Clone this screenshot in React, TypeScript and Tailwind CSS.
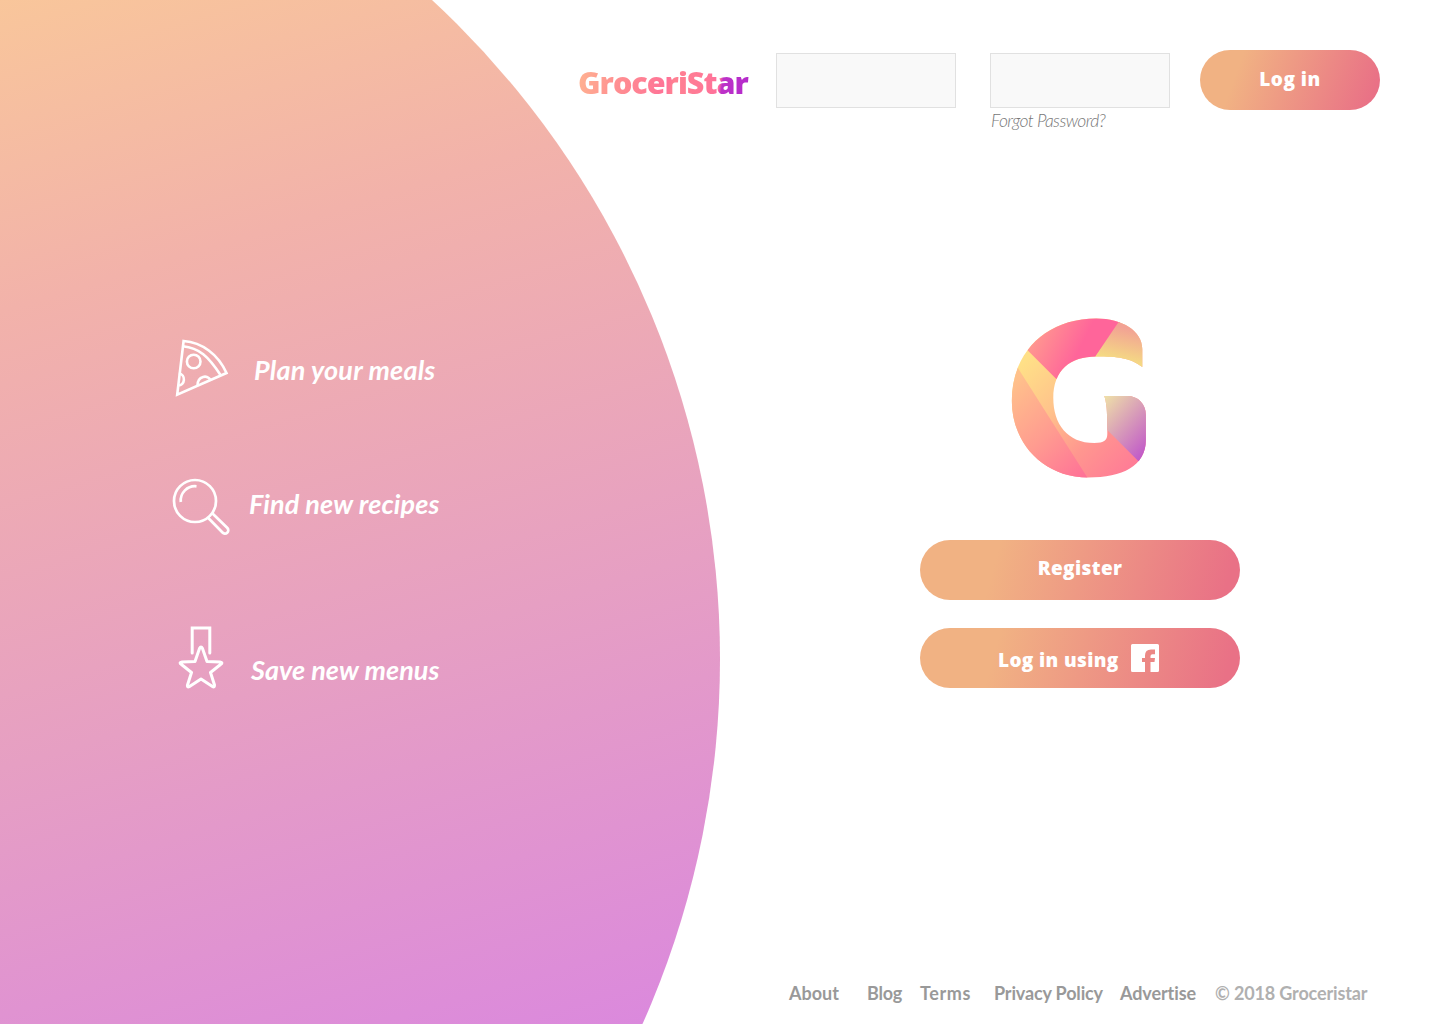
import React from "react";

const sans = "font-['Lato',sans-serif]";

function PizzaIcon() {
  return (
    <svg width="54" height="58" viewBox="0 0 54 58" fill="none" stroke="white" strokeWidth="2.6">
      <path d="M8.6 2C27 3.500 43 15 51.500 34L2.200 55.700Z" />
      <path d="M8 7.200C24 8.700 33.500 17.500 45.500 36" />
      <circle cx="18.700" cy="22.500" r="6.800" />
      <path d="M3.800 34.500C11 35 10.500 47 2.800 46.500M22.500 46.500C22.500 36.500 33 35.500 35.500 41" />
    </svg>
  );
}

function SearchIcon() {
  return (
    <svg width="58" height="58" viewBox="0 0 58 58" fill="none" stroke="white" strokeWidth="2.7">
      <circle cx="23" cy="23" r="21" />
      <path d="M8.800 24A14.300 14.300 0 0 1 24.500 8.300" />
      <path d="M35.800 39.500L50.500 54.500A2.800 2.800 0 0 0 55.400 50L40 35" />
    </svg>
  );
}

function MedalIcon() {
  return (
    <svg width="46" height="64" viewBox="0 0 46 64" fill="none" stroke="white" strokeWidth="3" strokeLinecap="round" strokeLinejoin="round">
      <path strokeLinejoin="miter" d="M14.200 28V3H31.800V28" />
      <path d="M21.500 23.500Q23 20.500 24.500 23.500L29 36.500L42 37Q45.500 37.500 42.500 39.500L32.500 47.500L36.500 60Q36.500 63 34.500 61.500L23 54L11.500 61.500Q9 63 9.500 60L13.500 47.500L3.500 39.500Q.5 37.500 4 37L17 36.500Z" />
    </svg>
  );
}

function GLogo() {
  return (
    <svg width="136" height="160" viewBox="0.7 0 136 160">
      <defs>
        <clipPath id="g">
          <path d="M132 49C120 40 108 38.500 86 38.500C60 38.500 43 52 43 80C43 106 57 125 84 125C94 125 97 122 97 116C97 100 97 87 94 78H117C128 78 135.600 86 135.600 97V122C135.600 148 112 159.500 78 159.500C32 159.500 1.500 124 1.500 83C1.500 34 36 .5 86 .5C112 .5 132 13 132 31Z" />
        </clipPath>
        <linearGradient id="a" gradientUnits="userSpaceOnUse" x1="0" y1="65" x2="85" y2="160"><stop stopColor="#ffc18b" /><stop offset=".5" stopColor="#ff9b90" /><stop offset="1" stopColor="#ff6b98" /></linearGradient>
        <linearGradient id="b" gradientUnits="userSpaceOnUse" x1="12" y1="45" x2="135" y2="165"><stop stopColor="#ffe087" /><stop offset=".3" stopColor="#ffc48b" /><stop offset=".6" stopColor="#ff968f" /><stop offset="1" stopColor="#ff7199" /></linearGradient>
        <linearGradient id="c" gradientUnits="userSpaceOnUse" x1="22" y1="28" x2="74" y2="54"><stop stopColor="#ff9590" /><stop offset=".75" stopColor="#ff659a" /></linearGradient>
        <linearGradient id="d" gradientUnits="userSpaceOnUse" x1="116" y1="10" x2="108" y2="45"><stop stopColor="#f2a294" /><stop offset="1" stopColor="#f5df82" /></linearGradient>
        <linearGradient id="e" gradientUnits="userSpaceOnUse" x1="90" y1="84" x2="148" y2="134"><stop stopColor="#eedfa8" /><stop offset="1" stopColor="#bb48cd" /></linearGradient>
      </defs>
      <g clipPath="url(#g)">
        <path fill="url(#b)" d="M0 0H136V160H0Z" />
        <path fill="url(#a)" d="M0 38L78 161H0Z" />
        <path fill="url(#c)" d="M8 23L46 61L85 39L115 -3H8Z" />
        <path fill="url(#d)" d="M82 43L113 -3H140V60Z" />
        <path fill="url(#e)" d="M92 76H140V155L92 107Z" />
      </g>
    </svg>
  );
}

const pill =
  "flex h-[60px] rounded-full font-['Open_Sans',sans-serif] text-[19px] font-extrabold leading-[26px] text-white";

const features = [
  { text: "Plan your meals", icon: <PizzaIcon />, row: "mt-[339px] h-[58px] pl-[175px]", label: "ml-[25px] mt-[13px] w-[184px] tracking-[0.2px]" },
  { text: "Find new recipes", icon: <SearchIcon />, row: "mt-[81px] h-[58px] pl-[172px]", label: "ml-[19px] mt-[8px] w-[192px] tracking-[0.1px]" },
  { text: "Save new menus", icon: <MedalIcon />, row: "mt-[89px] h-[64px] pl-[178px]", label: "ml-[27px] mt-[27px] w-[190px] tracking-[0.05px]" },
];

const links = [
  { text: "About", box: "w-[78px]" },
  { text: "Blog", box: "w-[53px] tracking-[-0.2px]" },
  { text: "Terms", box: "w-[74px] tracking-[0.6px]" },
  { text: "Privacy Policy", box: "w-[126px] tracking-[-0.15px]" },
  { text: "Advertise", box: "w-[95px] tracking-[-0.1px]" },
];

export default function App() {
  return (
    <main className={`grid h-[1024px] w-[1440px] grid-cols-[720px_720px] overflow-hidden bg-white ${sans}`}>
      <div className="col-start-1 row-start-1 h-[1024px] w-[720px] overflow-hidden">
        <div className="-ml-[1076px] -mt-[239px] h-[1796px] w-[1796px] rounded-full bg-[linear-gradient(163deg,#f9c79a_23.5%,#f2b2aa_37.5%,#e69fc3_57%,#da87df_78%)]" />
      </div>

      <section className="col-start-1 row-start-1 flex flex-col text-white">
        {features.map((f) => (
          <div key={f.text} className={`flex items-start ${f.row}`}>
            {f.icon}
            <span className={`whitespace-nowrap text-[27px] font-bold italic leading-9 ${f.label}`}>{f.text}</span>
          </div>
        ))}
      </section>

      <section className="col-start-2 row-start-1 flex h-[1024px] flex-col">
        <header className="-ml-[142px] flex h-[140px] items-start">
          <h1 className="mt-[62px] w-[198px] whitespace-nowrap bg-[linear-gradient(100deg,#ffb491_0,#ff8f91_42px,#ff7297_92px,#ff8192_98px,#ff7896_128px,#ff6f9b_143px,#bd31c8_146px,#b52bcb_170px)] bg-clip-text font-['Open_Sans',sans-serif] text-[30.5px] font-extrabold leading-10 tracking-[-1px] text-transparent">GroceriStar</h1>
          <input aria-label="Username" className="mt-[53px] h-[55px] w-[180px] border border-[#e1e1e1] bg-[#f9f9f9] px-3" />
          <div className="ml-[34px] mt-[53px] flex w-[180px] flex-col">
            <input aria-label="Password" type="password" className="h-[55px] border border-[#e1e1e1] bg-[#f9f9f9] px-3" />
            <a className="ml-px mt-px whitespace-nowrap text-[17.5px] font-light italic leading-6 tracking-[-0.6px] text-[#777]">Forgot Password?</a>
          </div>
          <button className={`ml-[30px] mt-[50px] w-[180px] justify-center bg-[linear-gradient(110deg,#f1b283_22%,#e97186_94%)] pt-[16px] tracking-[0.5px] ${pill}`}>Log in</button>
        </header>

        <div className="ml-[200px] mt-[178px] flex w-[320px] flex-col">
          <div className="ml-[91px] h-[222px]"><GLogo /></div>
          <button className={`justify-center bg-[linear-gradient(105deg,#f1b283_24%,#e97186_95%)] pt-[15px] tracking-[0.4px] ${pill}`}>Register</button>
          <button className={`mt-[28px] bg-[linear-gradient(105deg,#f1b283_24%,#e97186_95%)] pl-[78px] pt-[16px] ${pill}`}>
            <span className="mt-[3px] w-[133px] whitespace-nowrap text-left tracking-[0.35px]">Log in using</span>
            <svg width="28" height="28" viewBox="0 0 28 28"><path fill="white" d="M1.500 0H26.500Q28 0 28 1.500V26.500Q28 28 26.500 28H19.500V18H23.500L24 14H19.500V12Q19.500 10.300 21.500 10.300H24V5.500H20Q14 5.500 14 11.500V14H11V18H14V28H1.500Q0 28 0 26.500V1.500Q0 0 1.500 0Z" /></svg>
          </button>
        </div>

        <footer className="mb-[18px] ml-[69px] mt-auto flex whitespace-nowrap text-[18px] font-bold leading-[26px] text-[#999]">
          {links.map((l) => <a key={l.text} className={l.box}>{l.text}</a>)}
          <span className="tracking-[-0.15px] text-[#b0b0b0]">© 2018 Groceristar</span>
        </footer>
      </section>
    </main>
  );
}
